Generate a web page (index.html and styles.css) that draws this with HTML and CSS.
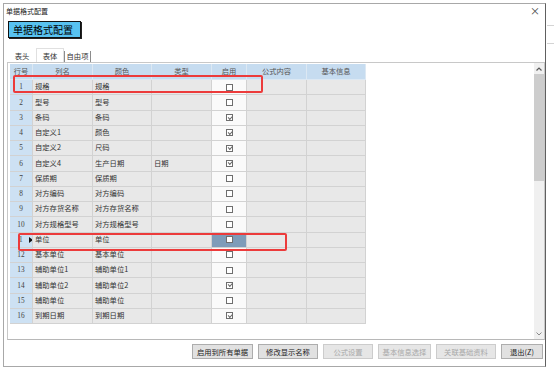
FILE: index.html
```html
<!DOCTYPE html>
<html lang="zh-CN">
<head>
<meta charset="UTF-8">
<title>单据格式配置</title>
<link rel="stylesheet" href="styles.css">
</head>
<body>
<div class="window">
  <div class="titlebar">
    <span>单据格式配置</span>
    <span class="close">×</span>
  </div>

  <div class="banner">单据格式配置</div>

  <div class="tabs">
    <span class="tab">表头</span>
    <span class="tab active">表体</span>
    <span class="tab focus">自由项</span>
  </div>

  <div class="panel">
    <div class="gridarea">
      <div class="row head">
        <div>行号</div><div>列名</div><div>颜色</div><div>类型</div><div>启用</div><div>公式内容</div><div>基本信息</div>
      </div>
      <div class="row"><div class="num">1</div><div>规格</div><div>规格</div><div></div><div class="chk"><span class="box"></span></div><div></div><div></div></div>
      <div class="row"><div class="num">2</div><div>型号</div><div>型号</div><div></div><div class="chk"><span class="box"></span></div><div></div><div></div></div>
      <div class="row"><div class="num">3</div><div>条码</div><div>条码</div><div></div><div class="chk"><span class="box on"></span></div><div></div><div></div></div>
      <div class="row"><div class="num">4</div><div>自定义1</div><div>颜色</div><div></div><div class="chk"><span class="box on"></span></div><div></div><div></div></div>
      <div class="row"><div class="num">5</div><div>自定义2</div><div>尺码</div><div></div><div class="chk"><span class="box on"></span></div><div></div><div></div></div>
      <div class="row"><div class="num">6</div><div>自定义4</div><div>生产日期</div><div>日期</div><div class="chk"><span class="box on"></span></div><div></div><div></div></div>
      <div class="row"><div class="num">7</div><div>保质期</div><div>保质期</div><div></div><div class="chk"><span class="box"></span></div><div></div><div></div></div>
      <div class="row"><div class="num">8</div><div>对方编码</div><div>对方编码</div><div></div><div class="chk"><span class="box"></span></div><div></div><div></div></div>
      <div class="row"><div class="num">9</div><div>对方存货名称</div><div>对方存货名称</div><div></div><div class="chk"><span class="box"></span></div><div></div><div></div></div>
      <div class="row"><div class="num">10</div><div>对方规格型号</div><div>对方规格型号</div><div></div><div class="chk"><span class="box"></span></div><div></div><div></div></div>
      <div class="row"><div class="num current">1<span class="pointer"></span></div><div>单位</div><div>单位</div><div></div><div class="chk sel"><span class="box"></span></div><div></div><div></div></div>
      <div class="row"><div class="num">12</div><div>基本单位</div><div>基本单位</div><div></div><div class="chk"><span class="box"></span></div><div></div><div></div></div>
      <div class="row"><div class="num">13</div><div>辅助单位1</div><div>辅助单位1</div><div></div><div class="chk"><span class="box"></span></div><div></div><div></div></div>
      <div class="row"><div class="num">14</div><div>辅助单位2</div><div>辅助单位2</div><div></div><div class="chk"><span class="box on"></span></div><div></div><div></div></div>
      <div class="row"><div class="num">15</div><div>辅助单位</div><div>辅助单位</div><div></div><div class="chk"><span class="box"></span></div><div></div><div></div></div>
      <div class="row"><div class="num">16</div><div>到期日期</div><div>到期日期</div><div></div><div class="chk"><span class="box on"></span></div><div></div><div></div></div>
    </div>

    <div class="scrollbar">
      <div class="arrow">
        <svg width="6" height="4" viewBox="0 0 6 4"><polyline points="0.5,3.5 3,1 5.5,3.5" fill="none" stroke="#5a5a5a" stroke-width="1.2"/></svg>
      </div>
      <div class="thumb"></div>
      <div class="track"></div>
      <div class="arrow">
        <svg width="6" height="4" viewBox="0 0 6 4"><polyline points="0.5,0.5 3,3 5.5,0.5" fill="none" stroke="#8a8a8a" stroke-width="1"/></svg>
      </div>
    </div>

    <!-- red annotation boxes drawn over the grid -->
    <div class="mark mark-top"></div>
    <div class="mark mark-unit"></div>
  </div>

  <div class="buttons">
    <span class="btn w61">启用到所有单据</span>
    <span class="btn w60">修改显示名称</span>
    <span class="btn off w50">公式设置</span>
    <span class="btn off w53">基本信息选择</span>
    <span class="btn off w60">关联基础资料</span>
    <span class="btn w42">退出(Z)</span>
  </div>
</div>
</body>
</html>
```

FILE: styles.css
```css
* {
  box-sizing: border-box;
}

body {
  margin: 0;
  width: 554px;
  height: 367px;
  overflow: hidden;
  font-family: "Noto Sans CJK SC", "Liberation Sans", sans-serif;
  color: #333;
  background:
    linear-gradient(#d4d4d4, #d4d4d4) 547px 25px / 7px 1px no-repeat,
    linear-gradient(#d4d4d4, #d4d4d4) 547px 43px / 7px 1px no-repeat,
    #fff;
}

.window {
  margin: 3px 0 0 3px;
  width: 543px;
  height: 364px;
  border: 1px solid #a8a8a8;
  border-right-color: #606060;
  background: #fff;
  display: flex;
  flex-direction: column;
}

.titlebar {
  height: 13px;
  padding: 0 5px 0 2px;
  display: flex;
  justify-content: space-between;
  align-items: center;
  font-size: 7px;
  color: #222;
}

.close {
  font-size: 10px;
  line-height: 1;
  color: #444;
}

.banner {
  margin: 4px 0 0 4px;
  width: 73px;
  height: 17px;
  padding-left: 4px;
  background: #58c2f0;
  border: 1px solid #111;
  box-shadow: 1px 1px 0 #222;
  font-size: 10px;
  line-height: 15px;
  color: #000;
}

.tabs {
  margin: 10px 0 0 4px;
  height: 14px;
  display: flex;
  font-size: 7.3px;
}

.tab {
  width: 28px;
  padding-top: 2px;
  line-height: 12px;
  text-align: center;
}

.tab.active {
  background: #fff;
  border: 1px solid #e0e0e0;
  border-bottom: none;
  padding-top: 1px;
}

.tab.focus {
  width: 27px;
  height: 11px;
  margin-top: 3px;
  padding-top: 0;
  line-height: 11px;
  border-left: 1px solid #8c8c8c;
  border-right: 1px solid #8c8c8c;
}

.panel {
  position: relative;
  margin-left: 3px;
  width: 538px;
  height: 278px;
  border: 1px solid #c8c8c8;
  border-bottom-color: #b8b8b8;
  display: flex;
}

.gridarea {
  flex: 1;
  padding: 1px 0 0 2px;
}

.row {
  display: grid;
  grid-template-columns: 23px 60px 59px 60px 35px 60px 59px;
  height: 15.25px;
  font-size: 7.3px;
  line-height: 1;
}

.row > div {
  display: flex;
  align-items: center;
  padding-left: 2px;
  white-space: nowrap;
  overflow: hidden;
  background: #e8e8e8;
  border-right: 1px solid #d2d2d2;
  border-bottom: 1px solid #d2d2d2;
}

.row.head {
  height: 16px;
}

.row.head > div {
  justify-content: center;
  padding: 0;
  background: #c6dcf0;
  color: #555;
  border-color: #dce8f3;
}

.row > .num {
  justify-content: center;
  padding: 0;
  background: #cde1f3;
  color: #444;
  font-family: "Liberation Serif", serif;
}

.row > .num.current {
  justify-content: flex-start;
  padding-left: 9px;
}

.pointer {
  margin-left: 6px;
  border-left: 4px solid #111;
  border-top: 3px solid transparent;
  border-bottom: 3px solid transparent;
}

.row > .chk {
  justify-content: center;
  padding: 0;
  background: #fafafa;
}

.row > .chk.sel {
  background: #7e9cb9;
}

.box {
  position: relative;
  width: 7px;
  height: 7px;
  background: #fff;
  border: 1px solid #6e6e6e;
}

.box.on::after {
  content: "";
  position: absolute;
  left: 1px;
  top: 0.5px;
  width: 3px;
  height: 1.5px;
  border-left: 1px solid #666;
  border-bottom: 1px solid #666;
  transform: rotate(-45deg);
}

.scrollbar {
  width: 10px;
  background: #f0f0f0;
  display: flex;
  flex-direction: column;
}

.arrow {
  height: 11px;
  display: flex;
  align-items: center;
  justify-content: center;
}

.thumb {
  height: 107px;
  background: #cdcdcd;
}

.track {
  flex: 1;
}

.mark {
  position: absolute;
  border: 2px solid #ec3b3b;
  border-radius: 2px;
}

.mark-top {
  left: 5px;
  top: 12px;
  width: 250px;
  height: 18px;
}

.mark-unit {
  left: 10px;
  top: 170px;
  width: 269px;
  height: 18px;
}

.buttons {
  margin-top: 4px;
  padding-right: 2px;
  display: flex;
  justify-content: flex-end;
  gap: 5px;
}

.btn {
  height: 15px;
  display: flex;
  align-items: center;
  justify-content: center;
  font-size: 7.3px;
  color: #222;
  background: #e1e1e1;
  border: 1px solid #adadad;
}

.btn.off {
  color: #a8a8a8;
  background: #e6e6e6;
  border-color: #cccccc;
}

.w61 { width: 61px; }
.w60 { width: 60px; }
.w53 { width: 53px; }
.w50 { width: 50px; }
.w42 { width: 42px; }
```
